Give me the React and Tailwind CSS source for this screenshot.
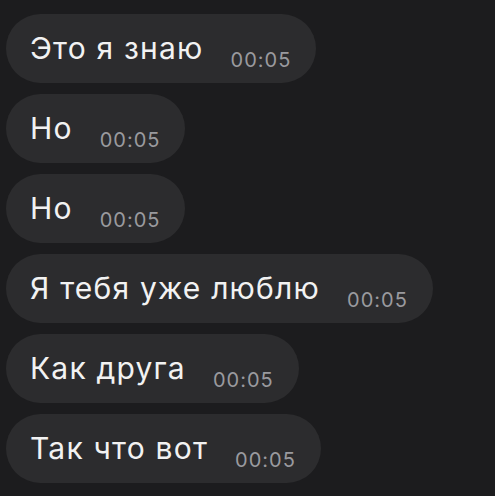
import React from 'react';

const messages = [
  { id: 1, text: 'Это я знаю', time: '00:05' },
  { id: 2, text: 'Но', time: '00:05' },
  { id: 3, text: 'Но', time: '00:05' },
  { id: 4, text: 'Я тебя уже люблю', time: '00:05' },
  { id: 5, text: 'Как друга', time: '00:05' },
  { id: 6, text: 'Так что вот', time: '00:05' },
];

export default function App() {
  return (
    <div
      className="w-[495px] h-[496px] bg-[#1c1c1e] overflow-hidden pt-[14px] px-[6px] flex flex-col items-start gap-[11px]"
      style={{ fontFamily: 'Inter, "Liberation Sans", sans-serif' }}
    >
      {messages.map(({ id, text, time }) => (
        <div
          key={id}
          className="h-[69px] rounded-full bg-[#2c2c2e] pl-[24px] pr-[25px] flex items-center gap-[27px]"
        >
          <span className="text-[30px] leading-none text-[#f2f2f2] tracking-[1.2px] -mt-[2px]">{text}</span>
          <span className="text-[20px] leading-none text-[#9a9a9e] tracking-[1px] mt-[22px]">{time}</span>
        </div>
      ))}
    </div>
  );
}
